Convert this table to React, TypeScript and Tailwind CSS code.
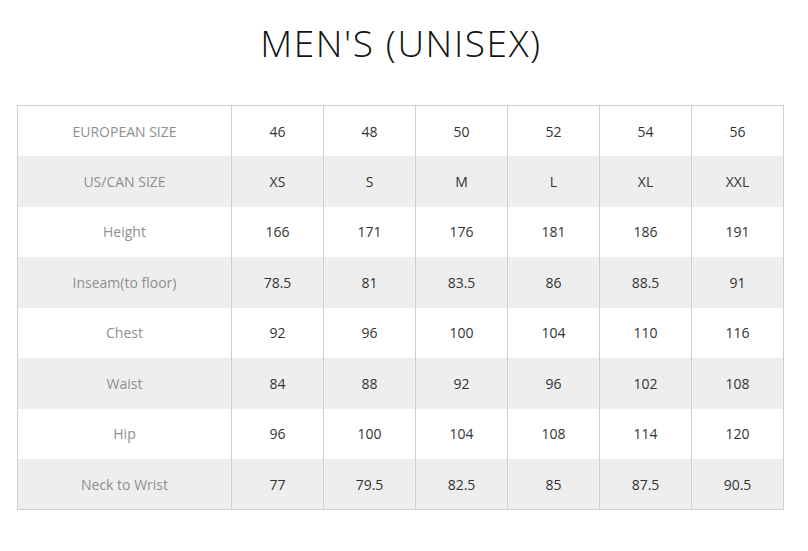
const header = ['EUROPEAN SIZE', '46', '48', '50', '52', '54', '56'];

const rows: string[][] = [
  ['US/CAN SIZE', 'XS', 'S', 'M', 'L', 'XL', 'XXL'],
  ['Height', '166', '171', '176', '181', '186', '191'],
  ['Inseam(to floor)', '78.5', '81', '83.5', '86', '88.5', '91'],
  ['Chest', '92', '96', '100', '104', '110', '116'],
  ['Waist', '84', '88', '92', '96', '102', '108'],
  ['Hip', '96', '100', '104', '108', '114', '120'],
  ['Neck to Wrist', '77', '79.5', '82.5', '85', '87.5', '90.5'],
];

export default function App() {
  const all = [header, ...rows];

  return (
    <div className="min-h-[551px] bg-white font-['Open_Sans',sans-serif]">
      <h1 className="w-[800px] pl-[2px] pt-[18px] text-center text-[37px] font-light leading-[50px] tracking-[1.6px] text-[#111]">
        MEN'S (UNISEX)
      </h1>

      <table className="ml-[17px] mt-[37px] w-[767px] table-fixed border-collapse border border-[#cfcfcf] text-center text-[14px]">
        <colgroup>
          <col className="w-[214px]" />
          <col span={6} className="w-[92px]" />
        </colgroup>
        <tbody>
          {all.map((row, i) => (
            <tr key={i} className={i % 2 === 1 ? 'h-[50.5px] bg-[#eeeeee]' : 'h-[50.5px] bg-white'}>
              {row.map((cell, j) => (
                <td
                  key={j}
                  className={
                    j === 0
                      ? 'border-x border-[#cfcfcf] p-0 text-[#8f8f8f]'
                      : 'border-x border-[#cfcfcf] p-0 text-[#333]'
                  }
                >
                  {cell}
                </td>
              ))}
            </tr>
          ))}
        </tbody>
      </table>
    </div>
  );
}
